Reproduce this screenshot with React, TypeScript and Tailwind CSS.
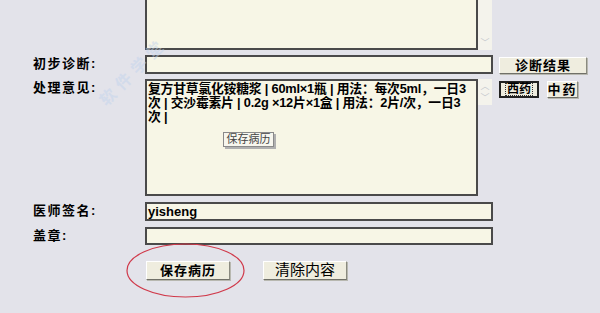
import React from "react";

const cjk = "font-['Liberation_Sans','Noto_Sans_CJK_SC',sans-serif]";

function Label({ text }: { text: string }) {
  return (
    <div className="w-[145px] shrink-0 pl-[33px] text-[13px] font-bold tracking-[1.5px] leading-[18px] text-black">{text}</div>
  );
}

function Btn({ text, className, bold = true }: { text: string; className: string; bold?: boolean }) {
  return (
    <button
      className={`p-0 flex items-center justify-center whitespace-nowrap bg-[#efeddf] border border-t-white border-l-white border-r-[#8a8a80] border-b-[#707068] shadow-[1px_1px_0_#b8b8b0] text-black ${bold ? "font-bold text-[13px] tracking-[1px]" : "text-[15px]"} ${className}`}
    >
      {text}
    </button>
  );
}

function Scrollbar({ up = true, down = true }: { up?: boolean; down?: boolean }) {
  return (
    <div className="w-[14px] shrink-0 flex flex-col justify-between items-center bg-[#f4f3ec] text-[#c4c8cc] text-[9px] leading-[12px] py-[1px]">
      <span>{up ? "︿" : ""}</span>
      <span>{down ? "﹀" : ""}</span>
    </div>
  );
}

export default function App() {
  const lines = [
    "复方甘草氯化铵糖浆 | 60ml×1瓶 | 用法：每次5ml，一日3",
    "次 | 交沙霉素片 | 0.2g ×12片×1盒 | 用法：2片/次，一日3",
    "次 |",
  ];
  return (
    <div className={`relative w-[600px] h-[313px] overflow-hidden bg-[#e3e3ea] ${cjk}`}>
      {/* top textarea (cut off) */}
      <div className="flex pl-[145px] h-[50px]">
        <div className="w-[333px] h-full bg-[#f7f6e6] border-x-2 border-b-2 border-[#4a4a4a]" />
        <Scrollbar up={false} />
      </div>

      {/* 初步诊断 */}
      <div className="flex items-start mt-[5px] h-[19px]">
        <Label text="初步诊断:" />
        <div className="w-[348px] h-[19px] bg-[#f7f6e6] border-2 border-[#4a4a4a]" />
        <Btn text="诊断结果" className="ml-[6px] mt-[2px] w-[88px] h-[17px]" />
      </div>

      {/* 处理意见 */}
      <div className="flex items-start mt-[5px] h-[117px]">
        <Label text="处理意见:" />
        <div className="w-[333px] h-full bg-[#f7f6e6] border-2 border-[#4a4a4a] pl-[1px] pt-[1px] overflow-hidden">
          {lines.map((l) => (
            <div key={l} className="whitespace-nowrap text-[12.8px] font-bold leading-[14px] tracking-[-0.2px] text-black">
              {l}
            </div>
          ))}
        </div>
        <Scrollbar />
        <div className="flex gap-[8px] ml-[7px] mt-[2px]">
          <button className="p-0 w-[40px] h-[17px] flex items-center justify-center bg-[#efeddf] border-2 border-[#222] text-[12px] font-bold text-black">
            <span className="border border-dotted border-[#333] px-[1px] leading-[11px] whitespace-nowrap">西药</span>
          </button>
          <Btn text="中药" className="w-[31px] h-[17px] !tracking-[2px]" />
        </div>
      </div>

      {/* 医师签名 */}
      <div className="flex items-start mt-[6px] h-[19px]">
        <Label text="医师签名:" />
        <div className="w-[348px] h-[19px] bg-[#f7f6e6] border-2 border-[#4a4a4a] pl-[1px] text-[13px] font-bold leading-[15px] text-black">
          yisheng
        </div>
      </div>

      {/* 盖章 */}
      <div className="flex items-start mt-[6px] h-[18px]">
        <Label text="盖章:" />
        <div className="w-[348px] h-[18px] bg-[#f7f6e6] border-2 border-[#4a4a4a]" />
      </div>

      {/* buttons */}
      <div className="flex mt-[16px] pl-[146px] gap-[33px]">
        <Btn text="保存病历" className="w-[84px] h-[19px]" />
        <Btn text="清除内容" bold={false} className="w-[84px] h-[19px]" />
      </div>

      {/* tooltip */}
      <div className="absolute left-[223px] top-[132px] w-[51px] h-[15px] bg-[#f7f6ee] border border-[#8a8a8a] shadow-[2px_2px_0_#b0b0b0] text-[11px] leading-[13px] text-center text-[#444]">
        保存病历
      </div>

      {/* red ellipse highlight */}
      <svg className="absolute left-0 top-0 pointer-events-none" width="600" height="313">
        <ellipse cx="185.5" cy="270.5" rx="58.5" ry="26.5" fill="none" stroke="#d0394a" strokeWidth="1.2" />
      </svg>

      {/* watermark */}
      <div className="absolute left-[90px] top-[60px] -rotate-45 text-[#c3d4ec] opacity-50 text-[16px] font-bold tracking-[6px] pointer-events-none">
        软件学堂
      </div>
    </div>
  );
}
